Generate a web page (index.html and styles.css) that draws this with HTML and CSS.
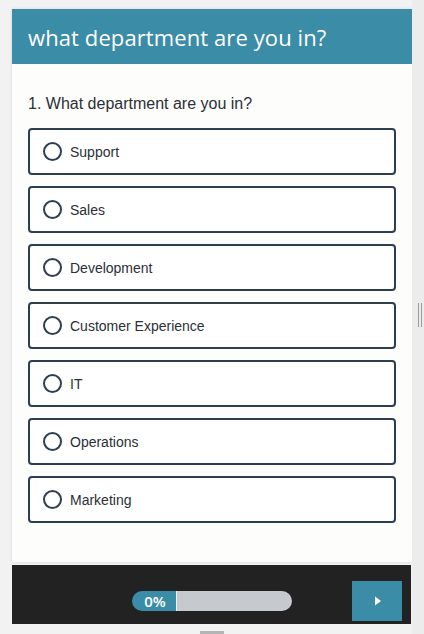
FILE: index.html
```html
<!DOCTYPE html>
<html>
<head>
<meta charset="utf-8">
<link rel="stylesheet" href="styles.css">
</head>
<body>
<div class="page">
  <div class="survey">
    <div class="card">
      <div class="header"><h1 class="title">what department are you in?</h1></div>
      <div class="content">
        <p class="question">1. What department are you in?</p>
        <div class="options">
          <label class="option"><span class="radio"></span><span class="label">Support</span></label>
          <label class="option"><span class="radio"></span><span class="label">Sales</span></label>
          <label class="option"><span class="radio"></span><span class="label">Development</span></label>
          <label class="option"><span class="radio"></span><span class="label">Customer Experience</span></label>
          <label class="option"><span class="radio"></span><span class="label">IT</span></label>
          <label class="option"><span class="radio"></span><span class="label">Operations</span></label>
          <label class="option"><span class="radio"></span><span class="label">Marketing</span></label>
        </div>
      </div>
    </div>
    <div class="footer">
      <div class="progress">
        <div class="progress-fill">0%</div>
        <div class="progress-rest"></div>
      </div>
      <button class="next" aria-label="Next">
        <svg width="8" height="10" viewBox="0 0 8 10"><path d="M1 0.5 L7 5 L1 9.5 Z" fill="#ffffff"/></svg>
      </button>
    </div>
    <div class="below"><span class="grip"></span></div>
  </div>
  <div class="side"><span class="handle"></span></div>
</div>
</body>
</html>
```
FILE: styles.css
```css
* { box-sizing: border-box; }
html, body { margin: 0; padding: 0; }
body {
  background: #f2f2f2;
  font-family: "Liberation Sans", Arial, sans-serif;
  width: 424px;
  height: 634px;
  overflow: hidden;
}
.page {
  display: flex;
  height: 634px;
}
.survey {
  width: 412px;
  padding: 9px 0 0 12px;
  display: flex;
  flex-direction: column;
}
.card {
  width: 400px;
  background: #fdfdfc;
  box-shadow: 0 0 3px rgba(0,0,0,0.12);
}
.header {
  height: 55px;
  background: #3b8ca7;
  display: flex;
  align-items: center;
  padding: 0 16px;
}
.title {
  margin: 0;
  color: #ffffff;
  font-family: "Open Sans", sans-serif;
  font-weight: 500;
  font-size: 22px;
  letter-spacing: 0.1px;
}
.content {
  padding: 30px 16px 39px;
}
.question {
  margin: 0 0 15px;
  font-size: 16px;
  line-height: 19px;
  color: #2b2f36;
}
.options {
  display: flex;
  flex-direction: column;
  gap: 11px;
  width: 368px;
}
.option {
  height: 47px;
  border: 2px solid #2e3e50;
  border-radius: 4px;
  display: flex;
  align-items: center;
  padding-left: 13px;
  gap: 8px;
  background: #ffffff;
}
.radio {
  width: 19px;
  height: 19px;
  border: 2px solid #2e3e50;
  border-radius: 50%;
  flex: none;
}
.label {
  font-size: 14px;
  color: #2b2f36;
}
.footer {
  margin-top: 3px;
  width: 399px;
  height: 59px;
  background: #222222;
  display: grid;
  grid-template-columns: 1fr 160px 1fr;
  align-items: center;
  padding: 16px 9px 3px 9px;
}
.progress {
  grid-column: 2;
  height: 20px;
  display: flex;
  border-radius: 10px;
  overflow: hidden;
  margin-top: -1px;
}
.progress-fill {
  width: 45px;
  background: #3b8ca7;
  color: #ffffff;
  font-size: 15px;
  font-weight: 600;
  font-family: "Open Sans", sans-serif;
  display: flex;
  align-items: center;
  justify-content: center;
  padding-left: 3px;
  border-right: 1px solid #f2f2f2;
}
.progress-rest {
  flex: 1;
  background: #c6c9cd;
}
.next {
  grid-column: 3;
  justify-self: end;
  width: 50px;
  height: 40px;
  border: none;
  background: #3b8ca7;
  display: flex;
  align-items: center;
  justify-content: center;
  padding: 0 0 0 2px;
}
.below {
  flex: 1;
  display: flex;
  justify-content: center;
  align-items: flex-end;
}
.grip {
  width: 24px;
  height: 3px;
  background: #b5b5b5;
}
.side {
  width: 12px;
  background: #ececec;
  display: flex;
  align-items: center;
  justify-content: center;
  padding-left: 3px;
}
.handle {
  width: 4px;
  height: 24px;
  border-left: 1px solid #9a9a9a;
  border-right: 1px solid #9a9a9a;
  margin-top: -4px;
}
```
